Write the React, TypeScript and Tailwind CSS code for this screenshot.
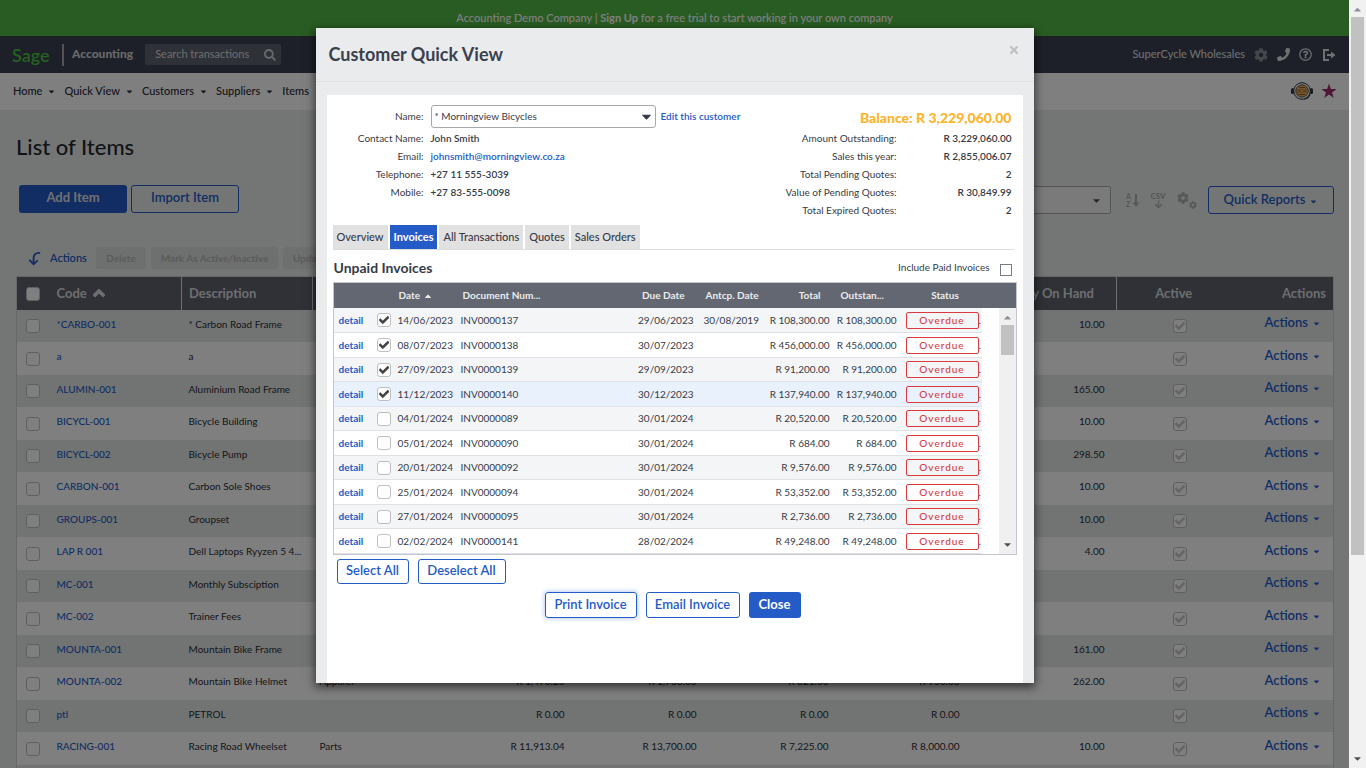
import {
  FaArrowDown,
  FaCaretDown,
  FaCaretUp,
  FaCheck,
  FaChevronUp,
  FaCog,
  FaPhone,
  FaRegQuestionCircle,
  FaSearch,
  FaStar,
  FaTimes,
} from "react-icons/fa";

const menu = ["Home", "Quick View", "Customers", "Suppliers", "Items"];

// code, description, category, four prices, quantity
const items = [
  ["*CARBO-001", "* Carbon Road Frame", "", "", "", "", "", "10.00"],
  ["a", "a", "", "", "", "", "", ""],
  ["ALUMIN-001", "Aluminium Road Frame", "", "", "", "", "", "165.00"],
  ["BICYCL-001", "Bicycle Building", "", "", "", "", "", "10.00"],
  ["BICYCL-002", "Bicycle Pump", "", "", "", "", "", "298.50"],
  ["CARBON-001", "Carbon Sole Shoes", "", "", "", "", "", "10.00"],
  ["GROUPS-001", "Groupset", "", "", "", "", "", "10.00"],
  ["LAP R 001", "Dell Laptops Ryyzen 5 4...", "", "", "", "", "", "4.00"],
  ["MC-001", "Monthly Subsciption", "", "", "", "", "", ""],
  ["MC-002", "Trainer Fees", "", "", "", "", "", ""],
  ["MOUNTA-001", "Mountain Bike Frame", "", "", "", "", "", "161.00"],
  ["MOUNTA-002", "Mountain Bike Helmet", "Apparel", "R 1,476.26", "R 1,700.00", "R 821.00", "R 950.00", "262.00"],
  ["ptl", "PETROL", "", "R 0.00", "R 0.00", "R 0.00", "R 0.00", ""],
  ["RACING-001", "Racing Road Wheelset", "Parts", "R 11,913.04", "R 13,700.00", "R 7,225.00", "R 8,000.00", "10.00"],
  ["", "", "", "", "", "", "", ""],
];

const invoices = [
  { date: "14/06/2023", doc: "INV0000137", due: "29/06/2023", antcp: "30/08/2019", total: "R 108,300.00", checked: true },
  { date: "08/07/2023", doc: "INV0000138", due: "30/07/2023", antcp: "", total: "R 456,000.00", checked: true },
  { date: "27/09/2023", doc: "INV0000139", due: "29/09/2023", antcp: "", total: "R 91,200.00", checked: true },
  { date: "11/12/2023", doc: "INV0000140", due: "30/12/2023", antcp: "", total: "R 137,940.00", checked: true, hover: true },
  { date: "04/01/2024", doc: "INV0000089", due: "30/01/2024", antcp: "", total: "R 20,520.00" },
  { date: "05/01/2024", doc: "INV0000090", due: "30/01/2024", antcp: "", total: "R 684.00" },
  { date: "20/01/2024", doc: "INV0000092", due: "30/01/2024", antcp: "", total: "R 9,576.00" },
  { date: "25/01/2024", doc: "INV0000094", due: "30/01/2024", antcp: "", total: "R 53,352.00" },
  { date: "27/01/2024", doc: "INV0000095", due: "30/01/2024", antcp: "", total: "R 2,736.00" },
  { date: "02/02/2024", doc: "INV0000141", due: "28/02/2024", antcp: "", total: "R 49,248.00" },
];

const contact = [
  ["Contact Name:", "John Smith"],
  ["Email:", "johnsmith@morningview.co.za"],
  ["Telephone:", "+27 11 555-3039"],
  ["Mobile:", "+27 83-555-0098"],
];

const totals = [
  ["Amount Outstanding:", "R 3,229,060.00"],
  ["Sales this year:", "R 2,855,006.07"],
  ["Total Pending Quotes:", "2"],
  ["Value of Pending Quotes:", "R 30,849.99"],
  ["Total Expired Quotes:", "2"],
];

const tabs = ["Overview", "Invoices", "All Transactions", "Quotes", "Sales Orders"];

type CheckProps = { label: string; checked?: boolean; disabled?: boolean };

const Check = ({ label, checked, disabled }: CheckProps) => (
  <span className="relative inline-block size-[14px] align-middle">
    <input
      type="checkbox"
      aria-label={label}
      defaultChecked={checked}
      disabled={disabled}
      className="peer block size-[14px] appearance-none rounded-[3px] border border-[#bfbfbf] bg-white"
    />
    <FaCheck
      stroke="currentColor"
      strokeWidth="40"
      className={
        disabled
          ? "pointer-events-none absolute top-[2px] left-[2px] hidden size-[10px] text-[#c6c8c7] peer-checked:block"
          : "pointer-events-none absolute top-[2px] left-[2px] hidden size-[10px] text-[#414141] peer-checked:block"
      }
    />
  </span>
);

const TopBar = () => (
  <header>
    <div className="flex h-9 items-center justify-center bg-[#52b944] text-[11px] font-medium text-white">
      <p>
        Accounting Demo Company |{" "}
        <a href="#signup" className="font-bold">
          Sign Up
        </a>{" "}
        for a free trial to start working in your own company
      </p>
    </div>
    <div className="flex h-[37px] items-center bg-[#3a4050] pr-[13px] pl-3 text-white">
      <span className="w-[50px] text-[18px] leading-5 font-semibold text-[#4cc23f]">Sage</span>
      <span className="h-[22px] w-[2px] bg-[#a4a7af]" />
      <span className="ml-2 pb-[2px] text-[12px] font-black text-[#d0d2d6]">Accounting</span>
      <div className="ml-3 flex h-[21px] w-[136px] items-center rounded-[2px] bg-[#5f6370] pr-[5px]">
        <input
          aria-label="Search transactions"
          placeholder="Search transactions"
          className="w-full min-w-0 flex-1 bg-transparent pl-[10px] text-[11px] placeholder:text-[#dcdcdc]"
        />
        <FaSearch className="size-3 text-[#cfd0d3]" />
      </div>
      <div className="ml-auto flex items-center text-[11px] text-[#e2e3e6]">
        <span className="mr-[9px]">SuperCycle Wholesales</span>
        <FaCog className="mr-[9px] size-[14px] text-[#8b8e95]" />
        <FaPhone className="mr-[9px] size-[13px]" />
        <FaRegQuestionCircle className="mr-[10px] size-[13px]" />
        <svg viewBox="0 0 14 14" className="size-[14px]" fill="none" stroke="currentColor" strokeWidth="2">
          <path d="M7 2H2v10h5" />
          <path d="M5 7h5" />
          <path d="M9 3.500 13.500 7 9 10.500z" fill="currentColor" stroke="none" />
        </svg>
      </div>
    </div>
    <nav className="flex h-[37px] items-center bg-white pr-3 pb-px pl-[13px] text-[11px] font-medium text-[#2a2e38]">
      {menu.map((m) => (
        <a key={m} href="#menu" className="mr-2 flex items-center gap-[5px]">
          {m}
          <FaCaretDown className="size-[9px]" />
        </a>
      ))}
      <svg viewBox="0 0 22 18" className="mr-2 ml-auto h-[18px] w-[22px]">
        <circle cx="11" cy="9" r="8.300" fill="#fff" stroke="#2a3038" strokeWidth="1" />
        <circle cx="11" cy="9" r="6.200" fill="#e3a95a" stroke="#38393c" strokeWidth="0.8" />
        <path
          d="M7 7.500l3 3m0-3-3 3m5-3 3 3m0-3-3 3M8 5.500h6M8 12.500h6"
          stroke="#8f5a1c"
          strokeWidth="0.9"
          fill="none"
        />
        <rect x="0" y="6" width="3" height="6" rx="1.500" fill="#343a46" />
        <rect x="19" y="6" width="3" height="6" rx="1.500" fill="#343a46" />
        <path d="M19 12c-1 3-3 5-6 5" fill="none" stroke="#343a46" strokeWidth="1.200" />
      </svg>
      {/* sharp five-point star, favourites */}
      <svg viewBox="0 0 16 16" className="size-4" fill="#9e2f68">
        <path d="M8 0.500 9.900 6H15.700L11 9.400 12.800 15 8 11.600 3.200 15 5 9.400 0.300 6H6.100z" />
      </svg>
    </nav>
  </header>
);

const ItemsPage = () => (
  <main className="pt-[23px] pr-[15px] pl-4">
    <h1 className="text-[22px] leading-7 font-medium text-[#22262f]">List of Items</h1>
    <div className="mt-[22px] flex items-center justify-between">
      <div className="flex gap-1 pl-[3px] text-[13px] font-semibold">
        <button className="h-7 w-[108px] rounded-[3px] bg-[#255bc7] pb-px font-bold text-[#dfe0e0]">Add Item</button>
        <button className="h-7 w-[108px] rounded-[3px] border border-[#255bc7] pb-px text-[#255bc7]">
          Import Item
        </button>
      </div>
      <div className="flex items-center pt-[3px] text-[#aeb1b0]">
        <button
          aria-label="Filter items"
          className="mr-[14px] flex h-7 w-[200px] items-center justify-end rounded-[2px] border border-[#a9a9a9] bg-[#f4f4f4] pr-2 text-[#4a4d55]"
        >
          <FaCaretDown className="size-[11px]" />
        </button>
        <svg viewBox="0 0 16 16" className="mr-[9px] size-4" fill="currentColor">
          <text x="1" y="7" fontSize="7" fontWeight="900">A</text>
          <text x="1" y="15" fontSize="7" fontWeight="900">Z</text>
          <path d="M10 2h2v8.500h2.500L11 15l-3.500-4.500H10z" />
        </svg>
        <span className="mr-[11px] flex w-4 flex-col items-center text-[8px] leading-[8px] font-black">
          CSV
          <FaArrowDown className="size-[9px]" />
        </span>
        <span className="mr-[11px] flex">
          <FaCog className="size-[12px]" />
          <FaCog className="mt-[9px] size-[8px]" />
        </span>
        <button className="flex h-7 w-[126px] items-center justify-center gap-1 rounded-[3px] border border-[#255bc7] pb-px text-[13px] font-semibold text-[#255bc7]">
          Quick Reports <FaCaretDown className="mt-[3px] size-[9px]" />
        </button>
      </div>
    </div>
    <div className="mt-[33px] flex h-[22px] items-center gap-[5px] pl-[11px]">
      <svg viewBox="0 0 14 16" className="size-[15px]" fill="none" stroke="#255bc7" strokeWidth="2">
        <path d="M13 2C8 1.500 6 4 6 8v5" />
        <path d="M1.500 9.500 6 14l4.500-4" />
      </svg>
      <span className="mr-1 w-10 pl-[3px] text-[11px] font-semibold text-[#255bc7]">Actions</span>
      <button className="h-[22px] w-[50px] rounded-[3px] bg-[#dddfde] text-[10px] font-bold text-[#b4b6b5]" disabled>
        Delete
      </button>
      <button className="h-[22px] w-[127px] rounded-[3px] bg-[#dddfde] text-[10px] font-bold text-[#b4b6b5]" disabled>
        Mark As Active/Inactive
      </button>
      <button
        className="h-[22px] w-[54px] overflow-hidden rounded-[3px] bg-[#dddfde] pl-[10px] text-left text-[10px] font-bold text-[#b4b6b5]"
        disabled
      >
        Update
      </button>
    </div>
    <table className="mt-[7px] w-full table-fixed border border-[#cfd0d0] text-[10px] text-[#2a2e38]">
      <thead>
        <tr className="h-[33px] bg-[#5e636f] text-left text-[13px] text-[#dcdddf]">
          <th className="w-[39px] pl-[9px]">
            <Check label="Select all items" />
          </th>
          <th className="w-[126px] border-r border-[#dcdddf] pl-px">
            <span className="flex items-center gap-[6px]">
              Code <FaChevronUp stroke="currentColor" strokeWidth="80" className="size-3" />
            </span>
          </th>
          <th className="w-[131px] border-r border-[#dcdddf] pl-[7px]">Description</th>
          <th className="pl-[7px]">Category</th>
          <th className="w-[132px]" />
          <th className="w-[132px]" />
          <th className="w-[132px]" />
          <th className="w-[131px]" />
          <th className="w-[149px] border-r border-[#dcdddf] pr-[22px] text-right">Quantity On Hand</th>
          <th className="w-[126px] pr-3 text-center">Active</th>
          <th className="w-[91px] pr-[7px] text-right">Actions</th>
        </tr>
      </thead>
      <tbody>
        {items.map(([code, desc, cat, a, b, c, d, qty], i) => (
          <tr key={i} className="odd:h-8 odd:bg-[#e4e8e6] even:h-[33px] even:bg-white">
            <td className="pl-[9px]">{code && <Check label={`Select ${code}`} />}</td>
            <td className="pb-[3px] pl-px font-medium">
              <a href="#item" className="text-[#255bc7]">
                {code}
              </a>
            </td>
            <td className="pb-[3px] pl-[7px] whitespace-nowrap">{desc}</td>
            <td className="pb-[3px] pl-[7px]">{cat}</td>
            <td className="pr-2 pb-[3px] text-right">{a}</td>
            <td className="pr-2 pb-[3px] text-right">{b}</td>
            <td className="pr-2 pb-[3px] text-right">{c}</td>
            <td className="pr-2 pb-[3px] text-right">{d}</td>
            <td className="pr-3 pb-[3px] text-right">{qty}</td>
            <td className="text-center">{code && <Check label={`${code} active`} checked disabled />}</td>
            <td className="pr-3 pb-[7px] text-right text-[13px] leading-4 font-semibold">
              {code && (
                <a href="#actions" className="inline-flex items-center gap-1 text-[#255bc7]">
                  Actions <FaCaretDown className="mt-[3px] size-[9px]" />
                </a>
              )}
            </td>
          </tr>
        ))}
      </tbody>
    </table>
  </main>
);

const InvoiceTable = () => (
  <div className="border border-[#c3c6cf]">
    <div className="flex">
      <table className="w-full table-fixed text-[10px] text-[#363b47]">
        <thead>
          <tr className="h-[25px] bg-[#626771] text-left text-[#ececee]">
            <th className="w-[63px]" />
            <th className="w-[64px] pl-[2px]">
              <span className="flex items-center gap-[3px]">
                Date <FaCaretUp className="size-[10px]" />
              </span>
            </th>
            <th className="pl-[2px]">Document Num...</th>
            <th className="w-[70px] pr-[10px] text-right">Due Date</th>
            <th className="w-[66px] pl-[11px]">Antcp. Date</th>
            <th className="w-[70px] pr-[10px] text-right">Total</th>
            <th className="w-[66px] pl-[10px]">Outstan...</th>
            <th className="w-[85px] pl-3 text-center">Status</th>
            <th className="w-[17px]" />
          </tr>
        </thead>
        <tbody>
          {invoices.map((inv) => (
            <tr key={inv.doc} className="group odd:h-6 even:h-[25px]">
              <td
                colSpan={8}
                className={
                  inv.hover
                    ? "border-b border-[#dfe3ea] bg-[#e9f1fc] p-0"
                    : "border-b border-[#dfe1e5] p-0 group-odd:bg-[#f4f5f7]"
                }
              >
                <div className="flex items-center pt-px">
                  <a href="#detail" className="w-[43px] pl-[5px] font-bold text-[#255bc7]">
                    detail
                  </a>
                  <Check label={`Select ${inv.doc}`} checked={inv.checked} />
                  <span className="w-[63px] pl-[7px]">{inv.date}</span>
                  <span className="flex-1 pl-[7px]">{inv.doc}</span>
                  <span className="w-[70px] text-right">{inv.due}</span>
                  <span className="w-[66px] pl-[10px]">{inv.antcp}</span>
                  <span className="w-[70px] text-right">{inv.total}</span>
                  <span className="w-[67px] text-right">{inv.total}</span>
                  <span className="ml-[9px] h-[17px] w-[73px] rounded-[2px] border border-[#d93a3f] text-center leading-[15px] font-medium tracking-[1px] text-[#d93a3f]">
                    Overdue
                  </span>
                  <span className="w-[3px]">.</span>
                </div>
              </td>
              <td />
            </tr>
          ))}
        </tbody>
      </table>
      <div className="flex w-[17px] shrink-0 flex-col">
        <div className="h-[25px] bg-[#626771]" />
        <div className="flex flex-1 flex-col items-center bg-[#f0f0f0]">
          <FaCaretUp className="mt-1 size-[11px] text-[#8a8f9b]" />
          <div className="mt-[2px] h-[30px] w-[13px] bg-[#c1c1c1]" />
          <FaCaretDown className="mt-auto mb-1 size-[11px] text-[#505050]" />
        </div>
      </div>
    </div>
  </div>
);

const QuickView = () => (
  <div
    role="dialog"
    aria-label="Customer Quick View"
    className="w-[718px] self-start bg-[#eaebed] text-[#363b47] shadow-[0_3px_9px_1px_rgba(0,0,0,0.6)]"
  >
    <div className="flex h-[54px] items-center justify-between border-b border-[#dfe1e3] pr-[14px] pl-[13px]">
      <h2 className="pb-[2px] text-[18px] leading-6 font-bold text-[#3b404d]">Customer Quick View</h2>
      <button aria-label="Close dialog" className="pb-[10px] text-[#bfc1c5]">
        <FaTimes className="size-3" />
      </button>
    </div>
    <div className="mx-[11px] mt-[13px] bg-white px-[6px] pt-[10px] pb-[65px] text-[10px]">
      <div className="flex h-[120px] justify-between pr-[5px]">
        <div>
          <div className="flex h-[23px] items-center">
            <label htmlFor="customer" className="w-[91px] text-right">
              Name:
            </label>
            <span className="relative ml-[7px]">
              <select
                id="customer"
                className="h-[23px] w-[225px] appearance-none rounded-[3px] border border-[#a6a8ab] bg-white pl-[3px] text-[10px]"
              >
                <option>* Morningview Bicycles</option>
              </select>
              <FaCaretDown className="pointer-events-none absolute top-[4px] right-[2px] size-[15px]" />
            </span>
            <a href="#edit" className="ml-[5px] font-semibold text-[#255bc7]">
              Edit this customer
            </a>
          </div>
          <dl className="mt-px">
            {contact.map(([k, v]) => (
              <div key={k} className="flex leading-[18px]">
                <dt className="w-[91px] text-right">{k}</dt>
                <dd className="ml-[7px] font-semibold">
                  {k === "Email:" ? (
                    <a href="#mail" className="text-[#255bc7]">
                      {v}
                    </a>
                  ) : (
                    v
                  )}
                </dd>
              </div>
            ))}
          </dl>
        </div>
        <div>
          <p className="pt-[3px] text-right text-[14px] leading-5 font-black text-[#fdb42b]">Balance: R 3,229,060.00</p>
          <dl className="mt-px">
            {totals.map(([k, v]) => (
              <div key={k} className="flex justify-end leading-[18px]">
                <dt>{k}</dt>
                <dd className="w-[115px] text-right font-semibold">{v}</dd>
              </div>
            ))}
          </dl>
        </div>
      </div>
      <div role="tablist" className="mr-[3px] flex gap-[2px] border-b border-[#dcdddf] text-[11px]">
        {tabs.map((t) => (
          <button
            key={t}
            role="tab"
            aria-selected={t === "Invoices"}
            className={
              t === "Invoices"
                ? "h-[24px] bg-[#255bc7] px-1 font-bold text-white"
                : "h-[24px] bg-[#e1e1e1] px-1 font-medium"
            }
          >
            {t}
          </button>
        ))}
      </div>
      <div className="flex h-8 items-center justify-between pt-[3px] pr-[5px]">
        <h3 className="pl-px text-[14px] font-bold">Unpaid Invoices</h3>
        <div className="flex items-center gap-[10px] text-[10px]">
          <label htmlFor="paid">Include Paid Invoices</label>
          <input
            id="paid"
            type="checkbox"
            className="mt-1 size-3 appearance-none border border-[#767b85] bg-white"
          />
        </div>
      </div>
      <InvoiceTable />
      <div className="mt-1 flex gap-[9px] pl-1 text-[13px] font-semibold text-[#255bc7]">
        <button className="h-[25px] w-[72px] rounded-[3px] border border-[#255bc7]">Select All</button>
        <button className="h-[25px] w-[88px] rounded-[3px] border border-[#255bc7]">Deselect All</button>
      </div>
      <div className="mt-2 flex justify-center gap-[9px] pr-1 text-[13px] font-semibold text-[#255bc7]">
        <button className="h-[26px] w-[92px] rounded-[3px] border border-[#255bc7] shadow-[0_0_4px_1px_rgba(37,91,199,0.3)]">
          Print Invoice
        </button>
        <button className="h-[26px] w-[94px] rounded-[3px] border border-[#255bc7]">Email Invoice</button>
        <button className="h-[26px] w-[52px] rounded-[3px] bg-[#255bc7] font-bold text-white">Close</button>
      </div>
    </div>
  </div>
);

export default function App() {
  return (
    <div className="flex h-screen overflow-hidden font-['Lato',sans-serif]">
      <div className="relative min-w-0 flex-1 overflow-hidden bg-[#e9edeb]">
        <TopBar />
        <ItemsPage />
        <div className="absolute inset-0 flex justify-center bg-black/50 pt-7">
          <QuickView />
        </div>
      </div>
      <div className="flex w-[17px] shrink-0 flex-col items-center bg-[#f1f1f1]">
        <FaCaretUp className="mt-1 size-[11px] text-[#8a8f9b]" />
        <div className="mt-[2px] h-[70vh] w-[13px] bg-[#c1c1c1]" />
        <FaCaretDown className="mt-auto mb-1 size-[11px] text-[#505050]" />
      </div>
    </div>
  );
}
